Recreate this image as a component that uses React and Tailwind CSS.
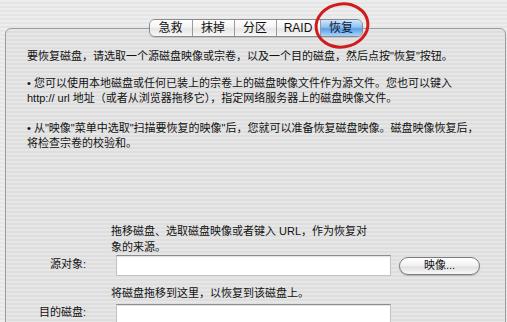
import React from 'react';

const tabs = ['急救', '抹掉', '分区', 'RAID', '恢复'];

const stripesOuter =
  'bg-[repeating-linear-gradient(to_bottom,#ededed_0px,#ededed_2px,#e5e5e5_2px,#e5e5e5_4px)]';

export default function App() {
  return (
    <div
      className={`relative w-[507px] h-[322px] overflow-hidden ${stripesOuter} font-['Liberation_Sans','Noto_Sans_CJK_SC',sans-serif] text-[11px] text-[#111]`}
    >
      {/* Panel */}
      <div className="ml-[5px] mt-[28px] w-[501px] h-[320px] rounded-t-[6px] border border-[#9c9c9c] bg-[repeating-linear-gradient(to_bottom,#e6e6e6_0px,#e6e6e6_2px,#dedede_2px,#dedede_4px)]">
        {/* Segmented tabs straddling the top border */}
        <div className="flex justify-center -mt-[10px]">
          <div className="flex h-[18px] rounded-[6px] border border-[#8a8a8a] overflow-hidden shadow-[0_1px_1px_rgba(0,0,0,0.15)] text-[12px]">
            {tabs.map((t, i) => (
              <div
                key={t}
                className={`flex items-center justify-center leading-none ${
                  i === 3 ? 'w-[44px]' : 'w-[42px]'
                } ${i > 0 ? 'border-l border-[#9a9a9a]' : ''} ${
                  i === 4
                    ? 'bg-[linear-gradient(to_bottom,#cfe6fc,#8fc1f0_45%,#5c9fe6_55%,#a9d5fb)] text-[#0c1a3a]'
                    : 'bg-[linear-gradient(to_bottom,#ffffff,#f4f4f4_45%,#e6e6e6_55%,#f7f7f7)] text-[#111]'
                }`}
              >
                {t}
              </div>
            ))}
          </div>
        </div>

        {/* Description */}
        <div className="pl-[21px] mt-[12px] leading-[15px] whitespace-nowrap">
          <p className="mb-[12px]">要恢复磁盘，请选取一个源磁盘映像或宗卷，以及一个目的磁盘，然后点按"恢复"按钮。</p>
          <p className="mb-[15px]">
            • 您可以使用本地磁盘或任何已装上的宗卷上的磁盘映像文件作为源文件。您也可以键入
            <br />
            http:// url 地址（或者从浏览器拖移它），指定网络服务器上的磁盘映像文件。
          </p>
          <p>
            • 从"映像"菜单中选取"扫描要恢复的映像"后，您就可以准备恢复磁盘映像。磁盘映像恢复后，
            <br />
            将检查宗卷的校验和。
          </p>
        </div>

        {/* Source / destination */}
        <div className="mt-[72px] leading-[15px]">
          <p className="ml-[105px] whitespace-nowrap leading-[16px]">
            拖移磁盘、选取磁盘映像或者键入 URL，作为恢复对
            <br />
            象的来源。
          </p>
          <div className="flex items-center">
            <div className="w-[80px] text-right -mt-[2px]">源对象:</div>
            <div className="ml-[30px] w-[275px] h-[21px] bg-white border border-[#c4c4c4] border-t-[#8c8c8c] shadow-[inset_0_1px_1px_rgba(0,0,0,0.12)]" />
            <button className="ml-[8px] w-[81px] h-[18px] rounded-full border border-[#7d7d7d] bg-[linear-gradient(to_bottom,#ffffff,#f1f1f1_50%,#e0e0e0_55%,#f8f8f8)] shadow-[0_1px_1px_rgba(0,0,0,0.2)] text-[11px] leading-none">
              映像...
            </button>
          </div>
          <p className="ml-[105px] mt-[10px] whitespace-nowrap">将磁盘拖移到这里，以恢复到该磁盘上。</p>
          <div className="flex items-start mt-[3px]">
            <div className="w-[80px] text-right mt-[1px]">目的磁盘:</div>
            <div className="ml-[30px] w-[275px] h-[30px] bg-white border border-[#c4c4c4] border-t-[#8c8c8c] shadow-[inset_0_1px_1px_rgba(0,0,0,0.12)]" />
          </div>
        </div>
      </div>

      {/* Red annotation ellipse */}
      <svg className="absolute left-[312px] top-[1px]" width="60" height="50" viewBox="0 0 60 50">
        <ellipse cx="30" cy="24.5" rx="26" ry="21.5" fill="none" stroke="#cf1d1d" strokeWidth="3" transform="rotate(-8 30 24.5)" />
      </svg>
    </div>
  );
}
